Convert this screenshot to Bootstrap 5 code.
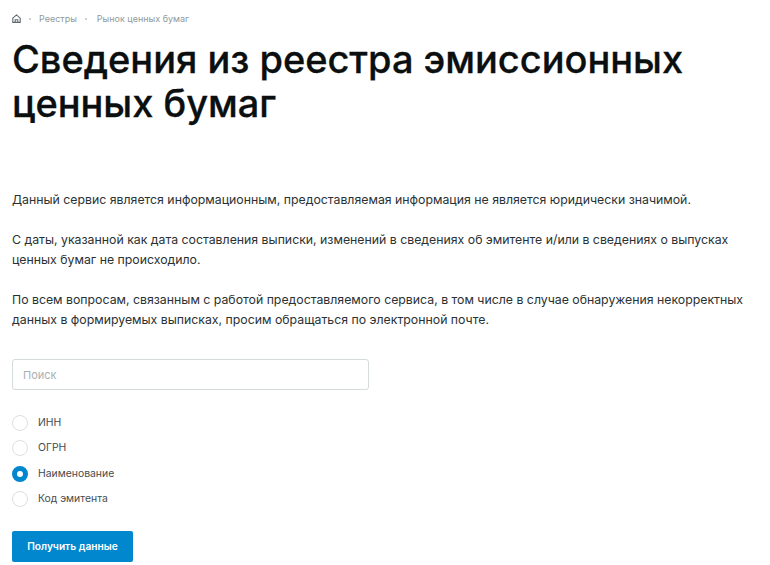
<!DOCTYPE html>
<html lang="ru"><head><meta charset="utf-8">
<link href="https://cdn.jsdelivr.net/npm/bootstrap@5.3.0/dist/css/bootstrap.min.css" rel="stylesheet">
<style>
html,body{height:565px;overflow:hidden}
body{font-family:"Inter","Liberation Sans",sans-serif;color:#2a3133;background:#fff}
.page-wrap{padding:12px 12px 0 12px}
.crumbs{font-size:9px;line-height:13px;color:#8f9a9e;gap:8px;height:13px}
.crumbs .dot{width:2px;height:2px;background:#b9c2c5;border-radius:50%}
.crumbs .lnk:last-child{margin-left:2px}
.head-title{font-family:"Inter",sans-serif;font-size:38px;line-height:43.5px;font-weight:500;color:#0b0f10;margin:13px 0 0 0;letter-spacing:-.03px;-webkit-text-stroke:.3px #0b0f10}
.intro{margin-top:65px;font-size:12.3px;line-height:20px}
.intro p{margin:0 0 20px 0}
.search-box{width:357px;height:31px;border:1px solid #d5dadb;border-radius:3px;font-size:11px;padding:0 10px;margin-top:29px;box-shadow:none;color:#333}
.search-box::placeholder{color:#a9b0b3}
.opts{margin-top:25px;gap:9.3px}
.opt{display:flex;align-items:center;gap:10px;font-size:10.4px;line-height:16px;color:#454c4e;margin:0}
.opt input{appearance:none;width:16px;height:16px;border:1px solid #dcdfe0;border-radius:50%;margin:0;background:#fff;flex:none}
.opt input:checked{border:5px solid #0087cd;background:#fff}
.go-btn{margin-top:24px;width:121px;height:31px;background:#0087cd;border:0;border-radius:2px;color:#fff;font-size:10.2px;font-weight:600;padding:0}
</style></head>
<body>
<main class="page-wrap">
<nav class="crumbs d-flex align-items-center">
<svg width="9" height="9" viewBox="0 0 9 9" fill="none" stroke="#5f6a6e" stroke-width="1.1"><path d="M.8 4.2 4.5.9l3.7 3.3v4.2H.8zM3.2 8.4V5.8h2.6v2.6"/></svg>
<span class="dot"></span><span class="lnk">Реестры</span><span class="dot"></span><span class="lnk">Рынок ценных бумаг</span>
</nav>
<h1 class="head-title">Сведения из реестра эмиссионных<br>ценных бумаг</h1>
<section class="intro">
<p>Данный сервис является информационным, предоставляемая информация не является юридически значимой.</p>
<p>С даты, указанной как дата составления выписки, изменений в сведениях об эмитенте и/или в сведениях о выпусках ценных бумаг не происходило.</p>
<p>По всем вопросам, связанным с работой предоставляемого сервиса, в том числе в случае обнаружения некорректных данных в формируемых выписках, просим обращаться по электронной почте.</p>
</section>
<form>
<input class="form-control search-box" type="text" placeholder="Поиск">
<div class="opts d-flex flex-column">
<label class="opt"><input type="radio" name="k">ИНН</label>
<label class="opt"><input type="radio" name="k">ОГРН</label>
<label class="opt"><input type="radio" name="k" checked>Наименование</label>
<label class="opt"><input type="radio" name="k">Код эмитента</label>
</div>
<button type="button" class="btn go-btn">Получить данные</button>
</form>
</main>
<script src="https://cdn.jsdelivr.net/npm/bootstrap@5.3.0/dist/js/bootstrap.bundle.min.js"></script>
</body></html>
